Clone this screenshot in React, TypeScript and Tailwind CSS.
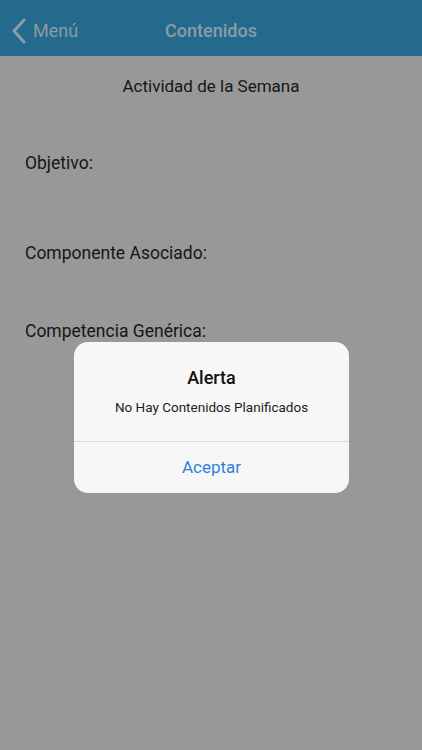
import React from 'react';

const App: React.FC = () => {
  return (
    <div
      className="relative w-[422px] h-[750px] bg-[#989898] overflow-hidden"
      style={{ fontFamily: 'Roboto, "Liberation Sans", sans-serif' }}
    >
      <div className="relative h-[56px] bg-[#246a8c] flex items-center pt-[5px]">
        <div className="flex items-center pl-[12px] text-[#8d9ba6]">
          <svg width="14" height="26" viewBox="0 0 14 26" fill="none">
            <path d="M12 2 L2 13 L12 24" stroke="currentColor" strokeWidth="3" strokeLinecap="round" strokeLinejoin="round" />
          </svg>
          <span className="ml-[7px] text-[18px] leading-none">Menú</span>
        </div>
        <div className="absolute inset-x-0 top-[5px] bottom-0 flex items-center justify-center pointer-events-none">
          <span className="text-[18px] font-medium text-[#8d9ba6] leading-none">Contenidos</span>
        </div>
      </div>

      <div className="text-[#161616]">
        <p className="text-center text-[17px] pt-[18px] leading-[24px]">Actividad de la Semana</p>
        <p className="pl-[25px] text-[17.5px] leading-[24px] mt-[53px]">Objetivo:</p>
        <p className="pl-[25px] text-[17.5px] leading-[24px] mt-[66px]">Componente Asociado:</p>
        <p className="pl-[25px] text-[17.5px] leading-[24px] mt-[54px]">Competencia Genérica:</p>
      </div>

      <div className="absolute left-[74px] top-[342px] w-[275px] rounded-[14px] bg-[#f7f7f7] overflow-hidden">
        <div className="pt-[24px] pb-[25px] text-center">
          <p className="text-[18px] font-medium text-[#111] leading-[24px]">Alerta</p>
          <p className="mt-[8px] text-[13.5px] text-[#222] leading-[18px]">No Hay Contenidos Planificados</p>
        </div>
        <div className="h-px bg-[#d8d8d8]" />
        <div className="h-[51px] flex items-center justify-center">
          <span className="text-[17px] text-[#2f7fdb]">Aceptar</span>
        </div>
      </div>
    </div>
  );
};

export default App;
